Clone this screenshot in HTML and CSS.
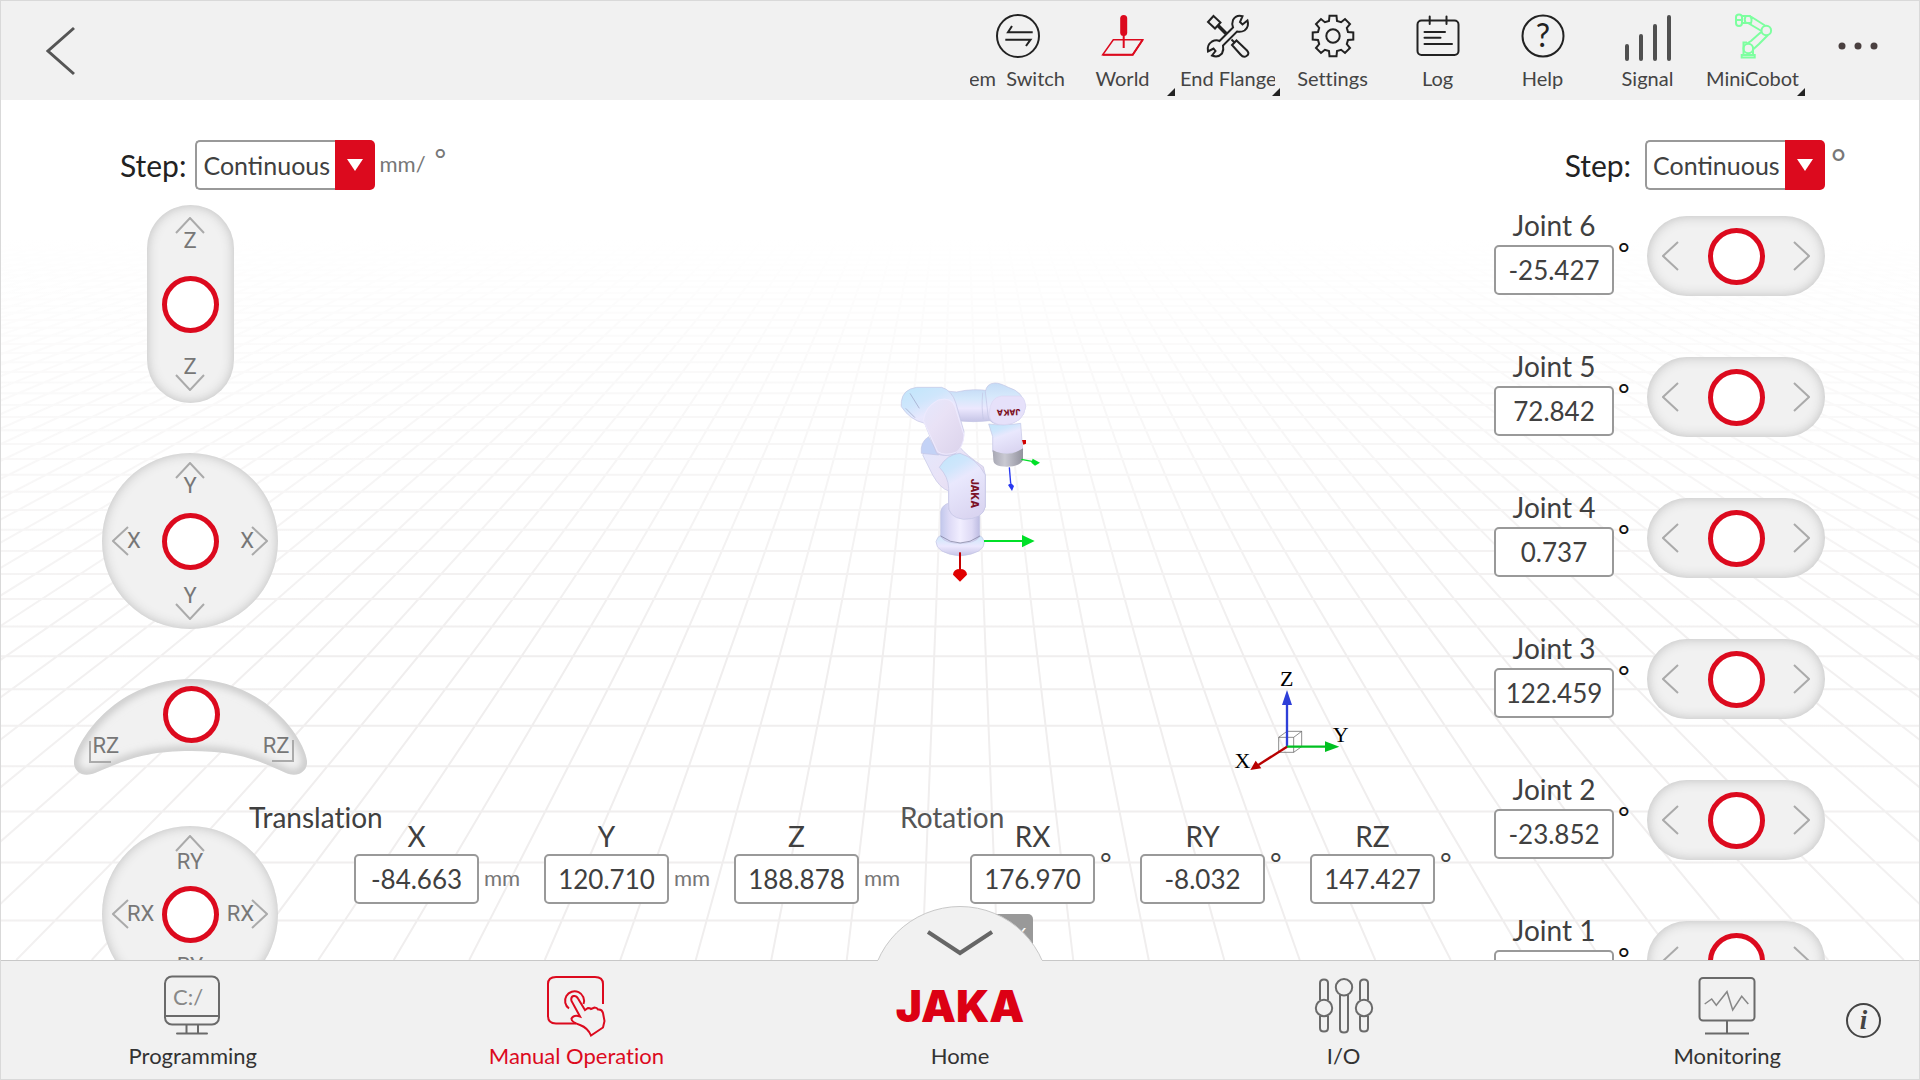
FILE: index.html
```html
<!DOCTYPE html>
<html lang="en">
<head>
<meta charset="utf-8">
<title>Manual Operation</title>
<link rel="stylesheet" href="styles.css">
</head>
<body>
<svg class="defs" aria-hidden="true">
  <symbol id="up" viewBox="0 0 30 17"><path d="M1 16 15 1 29 16"/></symbol>
  <symbol id="down" viewBox="0 0 30 17"><path d="M1 1 15 16 29 1"/></symbol>
  <symbol id="left" viewBox="0 0 17 30"><path d="M16 1 1 15 16 29"/></symbol>
  <symbol id="right" viewBox="0 0 17 30"><path d="M1 1 16 15 1 29"/></symbol>
</svg>
<div class="app">
  <header class="topbar">
    <button class="back" aria-label="Back"><svg width="30" height="50" viewBox="0 0 30 50"><path d="M28 2 2 25 28 48"/></svg></button>
    <nav class="tools">
      <button class="tool">
        <svg class="tool-icon" viewBox="0 0 44 44"><circle cx="22" cy="22" r="21"/><path d="M36.700 18.300H12L16 12M9.300 25.700H34.500L30 32"/></svg>
        <span class="tool-label tool-label-end">em&nbsp; Switch</span>
      </button>
      <button class="tool tool-red">
        <svg class="tool-icon" viewBox="0 0 44 44"><path d="M12.300 25.700H41.700L31.700 40.700H1.700Z" stroke-width="1.500"/><path d="M1.700 40.700H31.700L41.700 25.700M22.700 20V34"/><path d="M22.700 4.500V18.500" stroke-width="7" stroke-linecap="round"/></svg>
        <span class="tool-label">World</span><i class="corner"></i>
      </button>
      <button class="tool">
        <svg class="tool-icon" viewBox="0 0 44 44"><path d="M7.500 2 14.500 8.500 9 14.500 2 8ZM12 11.500 20 19.500M25.500 25.500 29 29M26 31 30.500 26.500 41 36.500Q44 40 40.500 42 37.500 44 34.500 40.500Z"/><path d="M12 11.500 20 19.500" stroke-width="3.500"/><path d="M36.500 2.200Q30 .500 27 6 25.500 10 27 13.500L13.500 27Q10 25.500 6 27.500 .500 31 2 37.500L7.500 34.500 9.500 37 6 41.500Q12 44 16 39.500 18 35.500 17 31.500L31 17.500Q35 18.500 38.500 16.500 43.500 12.500 41.500 6.500L36.500 10.500 34 8Z"/></svg>
        <span class="tool-label tool-label-start">End Flange</span><i class="corner"></i>
      </button>
      <button class="tool">
        <svg class="tool-icon" viewBox="-22 -22 44 44"><circle r="6.700"/><path d="M-4-15-3.500-20.300H3.500L4-15 8.130-13.800 12-17 17-12 13.800-8.130 15-4 20.300-3.500V3.500L15 4 13.800 8.130 17 12 12 17 8.130 13.800 4 15 3.500 20.300H-3.500L-4 15-8.130 13.800-12 17-17 12-13.800 8.130-15 4-20.300 3.500V-3.500L-15-4-13.800-8.130-17-12-12-17-8.130-13.800Z"/></svg>
        <span class="tool-label">Settings</span>
      </button>
      <button class="tool">
        <svg class="tool-icon" viewBox="0 0 44 44"><rect x="1.500" y="6.500" width="41" height="34.500" rx="4"/><path d="M13.700 2.500V10M30.500 2.500V10M8.500 18H29M8.500 23.700H24.500M8.500 30H36" stroke-linecap="round"/></svg>
        <span class="tool-label">Log</span>
      </button>
      <button class="tool">
        <svg class="tool-icon" viewBox="0 0 44 44"><circle cx="22" cy="22" r="20.500"/><text x="22" y="33" class="glyph-help">?</text></svg>
        <span class="tool-label">Help</span>
      </button>
      <button class="tool">
        <svg class="tool-icon" viewBox="0 0 44 44"><path d="M1 32V45M15 22V45M29 12V45M43 3V45" stroke="#505050" stroke-width="4" stroke-linecap="round"/></svg>
        <span class="tool-label">Signal</span>
      </button>
      <button class="tool">
        <svg class="tool-icon tool-green" viewBox="0 0 44 44"><circle cx="35.300" cy="16.500" r="4.800"/><circle cx="17.300" cy="34.500" r="4.800"/><path d="M10.700 41H23.700V43.500H10.700ZM12.500 41V28.500H16M22 41V36M5 3Q5 .500 8 .500T11 3V9Q11 12 8 12T5 9ZM5 6H11M11 2H19Q21.500 5 20 9H11M15 2Q12.500 5.500 15 9M19 2 34 11.500M17 9 30.500 17M16 29.500 20 27 30.700 17.500M22 35.500 28 30 37 21"/></svg>
        <span class="tool-label">MiniCobot</span><i class="corner"></i>
      </button>
      <button class="more" aria-label="More"><svg width="40" height="8" viewBox="0 0 40 8"><circle cx="4" cy="4" r="3.500"/><circle cx="20" cy="4" r="3.500"/><circle cx="36" cy="4" r="3.500"/></svg></button>
    </nav>
  </header>

  <main class="stage">
    <svg class="scene" viewBox="0 0 1920 860" preserveAspectRatio="xMidYMax slice" aria-hidden="true">
      <defs>
        <linearGradient id="fog" x1="0" y1="0" x2="0" y2="1"><stop offset="0" stop-color="#fff"/><stop offset=".16" stop-color="#fff"/><stop offset=".32" stop-color="#fff" stop-opacity=".65"/><stop offset=".65" stop-color="#fff" stop-opacity="0"/></linearGradient>
        <radialGradient id="fogSide" gradientUnits="userSpaceOnUse" cx="960" cy="860" r="1200"><stop offset=".550" stop-color="#fff" stop-opacity="0"/><stop offset="1" stop-color="#fff" stop-opacity=".3"/></radialGradient>
        <linearGradient id="tube" x1="0" x2="1"><stop offset="0" stop-color="#c2c8ec"/><stop offset=".22" stop-color="#dddaf6"/><stop offset=".5" stop-color="#f1eeff"/><stop offset=".8" stop-color="#dedaf5"/><stop offset="1" stop-color="#bdbce2"/></linearGradient>
        <linearGradient id="shell" x1=".2" y1="0" x2=".6" y2="1"><stop offset="0" stop-color="#c3e6fb"/><stop offset=".22" stop-color="#cfe6fc"/><stop offset=".42" stop-color="#e9e8fd"/><stop offset="1" stop-color="#dad5f1"/></linearGradient>
        <linearGradient id="beam" x1="0" y1="0" x2="0" y2="1"><stop offset="0" stop-color="#c5dcf6"/><stop offset=".3" stop-color="#d5e8fb"/><stop offset=".6" stop-color="#ece8fe"/><stop offset="1" stop-color="#c5c4e6"/></linearGradient>
        <linearGradient id="upper" x1="0" y1="0" x2=".9" y2="1"><stop offset="0" stop-color="#e4e8fd"/><stop offset=".4" stop-color="#e9e2f6"/><stop offset="1" stop-color="#dcd4ec"/></linearGradient>
        <linearGradient id="steel" x1="0" x2="1"><stop offset="0" stop-color="#a8a8b4"/><stop offset=".4" stop-color="#c9c9d2"/><stop offset="1" stop-color="#92929e"/></linearGradient>
      </defs>
      <path id="grid" fill="none" stroke="#f0eeee" stroke-width="2"/>
      <rect width="1920" height="860" fill="url(#fog)"/>
      <rect width="1920" height="860" fill="url(#fogSide)"/>
      <g transform="translate(860 260) scale(.33333)">
        <g stroke="#c3c4e4" stroke-width="2">
          <path d="M228 545Q232 515 300 515T373 545Q375 580 300 588 228 580 228 545Z" fill="url(#beam)"/>
          <path d="M242 455Q245 425 300 425T359 470V530Q345 550 300 550T242 530Z" fill="url(#tube)"/>
          <path d="M188 285Q200 262 228 262L300 262Q318 285 370 320L376 345V440Q370 478 300 474 262 462 266 435V393Q240 385 218 345Z" fill="url(#upper)"/>
          <path d="M184 280Q180 246 206 230L236 285Z" fill="#c3d2f6"/>
          <path d="M238 322Q262 282 300 280 350 295 376 345V440Q368 478 310 478 262 472 266 430V385Q265 350 238 322Z" fill="url(#shell)"/>
          <path d="M240 86Q262 96 290 96 340 84 390 93V182Q340 188 290 182L250 150Z" fill="url(#beam)"/>
          <path d="M368 98Q364 145 370 178" fill="none"/>
          <path d="M386 192Q430 198 482 190L488 270Q445 290 398 275V230Z" fill="url(#shell)"/>
          <path d="M376 95Q380 70 405 69 420 69 445 82 490 95 497 140 490 192 430 194 385 195 384 165Z" fill="url(#beam)"/>
          <path d="M388 160Q390 112 425 108H480Q495 112 497 140 490 190 435 194 388 196 388 160Z" fill="#e6e1fa" stroke="#dbd8f3"/>
          <path d="M124 125Q128 88 170 82H245Q275 90 288 130L312 215Q312 255 285 282 250 292 230 280L194 190Q150 180 124 140Z" fill="url(#shell)"/>
          <path d="M190 182Q195 140 235 120 275 110 285 140L312 225Q310 260 290 276 255 290 233 275Z" fill="url(#upper)" stroke="#eeeafe" stroke-width="3"/>
          <path d="M150 100 178 145M137 145 165 173" fill="none" stroke="#9aa0c2"/>
          <path d="M398 270Q445 295 489 265V300Q480 320 440 320T400 300Z" fill="url(#steel)" stroke="none"/>
          <path d="M242 528Q300 570 360 528" fill="none" stroke="#777a96"/>
        </g>
        <text class="decal" transform="translate(333 356) rotate(90)" font-size="31">JAKA</text>
        <text class="decal" transform="translate(481 147) rotate(178)" font-size="25">JAKA</text>
        <path d="M372 543H490" stroke="#00e028" stroke-width="6"/><path d="M486 525 524 543 486 562Z" fill="#00e028"/>
        <path d="M300 577V635" stroke="#c40000" stroke-width="6"/><path d="M279 644Q280 627 300 627T321 644L300 665Z" fill="#e00000"/>
        <path d="M486 240H498V251L490 254Z" fill="#d00000"/>
        <path d="M484 298 520 305" stroke="#00e028" stroke-width="4"/><path d="M518 296 540 308 525 317 514 308Z" fill="#00e028"/>
        <path d="M448 322 452 370" stroke="#2838f0" stroke-width="4"/><path d="M444 375 453 369 462 378 456 393Z" fill="#2838f0"/>
      </g>
      <g transform="translate(1200 550) scale(.33333)">
        <path d="M236 262H281V307H236ZM261 244H305V290H261ZM236 262 261 244M281 262 305 244M281 307 305 290M236 307 261 290" fill="none" stroke="#555" stroke-width="2"/>
        <path d="M261 290V160" stroke="#2e3fd8" stroke-width="7"/><path d="M261 120 276 165H246Z" fill="#2e3fd8"/>
        <path d="M261 290H380" stroke="#00c020" stroke-width="7"/><path d="M418 290 375 274V306Z" fill="#00c020"/>
        <path d="M261 290 175 345" stroke="#b80000" stroke-width="7"/><path d="M151 360 167 332 184 355Z" fill="#b80000"/>
        <g class="axis-name"><text x="260" y="109">Z</text><text x="422" y="277">Y</text><text x="127" y="354">X</text></g>
      </g>
    </svg>

    <div class="steps">
      <div class="step">
        <label for="step-linear">Step:</label>
        <div class="picker"><select id="step-linear"><option>Continuous</option></select><span class="picker-arrow"><svg width="16" height="12" viewBox="0 0 16 12"><path d="M0 0H16L8 12Z"/></svg></span></div>
        <span class="unit">mm/</span><span class="degree">°</span>
      </div>
      <div class="step step-joint">
        <label for="step-joint">Step:</label>
        <div class="picker"><select id="step-joint"><option>Continuous</option></select><span class="picker-arrow"><svg width="16" height="12" viewBox="0 0 16 12"><path d="M0 0H16L8 12Z"/></svg></span></div>
        <span class="degree degree-large">°</span>
      </div>
    </div>

    <div class="board">
      <section class="pads" aria-label="Cartesian jog">
        <div class="pad pad-tall">
          <button class="jog jog-up"><svg class="arrow-v"><use href="#up"/></svg><span>Z</span></button>
          <button class="knob" aria-label="Move Z"></button>
          <button class="jog jog-down"><span>Z</span><svg class="arrow-v"><use href="#down"/></svg></button>
        </div>
        <div class="pad pad-round">
          <button class="jog jog-up"><svg class="arrow-v"><use href="#up"/></svg><span>Y</span></button>
          <button class="jog jog-left"><svg class="arrow-h"><use href="#left"/></svg><span>X</span></button>
          <button class="knob" aria-label="Move X and Y"></button>
          <button class="jog jog-right"><span>X</span><svg class="arrow-h"><use href="#right"/></svg></button>
          <button class="jog jog-down"><span>Y</span><svg class="arrow-v"><use href="#down"/></svg></button>
        </div>
        <div class="pad-arc">
          <svg class="arc" viewBox="0 0 233 97">
            <defs>
              <clipPath id="arcClip"><path d="M0 82C4 58 45 0 117 0S230 58 233 82C234 92 224 99 212 94 185 82 165 72 117 72S50 82 21 94C8 99-1 92 0 82Z"/></clipPath>
              <filter id="soft" x="-10%" y="-10%" width="120%" height="120%"><feGaussianBlur stdDeviation="4"/></filter>
            </defs>
            <g clip-path="url(#arcClip)"><rect width="233" height="97" fill="#f1f1f1"/><path d="M0 82C4 58 45 0 117 0S230 58 233 82C234 92 224 99 212 94 185 82 165 72 117 72S50 82 21 94C8 99-1 92 0 82Z" fill="none" stroke="#bdbdbd" stroke-width="7" filter="url(#soft)"/></g>
            <path d="M16 62V83H37M219 61V82H198" fill="none" stroke="#aaa" stroke-width="2"/>
          </svg>
          <div class="arc-controls"><button class="jog">RZ</button><button class="knob" aria-label="Rotate Z"></button><button class="jog">RZ</button></div>
        </div>
        <div class="pad pad-round pad-tilt">
          <button class="jog jog-up"><svg class="arrow-v"><use href="#up"/></svg><span>RY</span></button>
          <button class="jog jog-left"><svg class="arrow-h"><use href="#left"/></svg><span>RX</span></button>
          <button class="knob" aria-label="Rotate X and Y"></button>
          <button class="jog jog-right"><span>RX</span><svg class="arrow-h"><use href="#right"/></svg></button>
          <button class="jog jog-down"><span>RY</span><svg class="arrow-v"><use href="#down"/></svg></button>
        </div>
      </section>

      <section class="pose">
        <div class="pose-group">
          <h2 class="pose-title">Translation</h2>
          <div class="fields">
            <div class="field"><label for="px">X</label><input id="px" value="-84.663"><span class="unit">mm</span></div>
            <div class="field"><label for="py">Y</label><input id="py" value="120.710"><span class="unit">mm</span></div>
            <div class="field"><label for="pz">Z</label><input id="pz" value="188.878"><span class="unit">mm</span></div>
          </div>
        </div>
        <div class="pose-group pose-rotation">
          <h2 class="pose-title">Rotation</h2>
          <div class="fields">
            <div class="field"><label for="rx">RX</label><input id="rx" value="176.970"><span class="degree">°</span></div>
            <div class="field"><label for="ry">RY</label><input id="ry" value="-8.032"><span class="degree">°</span></div>
            <div class="field"><label for="rz">RZ</label><input id="rz" value="147.427"><span class="degree">°</span></div>
          </div>
        </div>
      </section>

      <section class="joints" aria-label="Joint jog">
        <div class="joint"><div class="joint-field"><label for="j6">Joint 6</label><input id="j6" value="-25.427"><span class="degree">°</span></div><div class="pad pad-wide"><button class="jog" aria-label="Joint 6 minus"><svg class="arrow-h"><use href="#left"/></svg></button><button class="knob" aria-label="Joint 6"></button><button class="jog" aria-label="Joint 6 plus"><svg class="arrow-h"><use href="#right"/></svg></button></div></div>
        <div class="joint"><div class="joint-field"><label for="j5">Joint 5</label><input id="j5" value="72.842"><span class="degree">°</span></div><div class="pad pad-wide"><button class="jog" aria-label="Joint 5 minus"><svg class="arrow-h"><use href="#left"/></svg></button><button class="knob" aria-label="Joint 5"></button><button class="jog" aria-label="Joint 5 plus"><svg class="arrow-h"><use href="#right"/></svg></button></div></div>
        <div class="joint"><div class="joint-field"><label for="j4">Joint 4</label><input id="j4" value="0.737"><span class="degree">°</span></div><div class="pad pad-wide"><button class="jog" aria-label="Joint 4 minus"><svg class="arrow-h"><use href="#left"/></svg></button><button class="knob" aria-label="Joint 4"></button><button class="jog" aria-label="Joint 4 plus"><svg class="arrow-h"><use href="#right"/></svg></button></div></div>
        <div class="joint"><div class="joint-field"><label for="j3">Joint 3</label><input id="j3" value="122.459"><span class="degree">°</span></div><div class="pad pad-wide"><button class="jog" aria-label="Joint 3 minus"><svg class="arrow-h"><use href="#left"/></svg></button><button class="knob" aria-label="Joint 3"></button><button class="jog" aria-label="Joint 3 plus"><svg class="arrow-h"><use href="#right"/></svg></button></div></div>
        <div class="joint"><div class="joint-field"><label for="j2">Joint 2</label><input id="j2" value="-23.852"><span class="degree">°</span></div><div class="pad pad-wide"><button class="jog" aria-label="Joint 2 minus"><svg class="arrow-h"><use href="#left"/></svg></button><button class="knob" aria-label="Joint 2"></button><button class="jog" aria-label="Joint 2 plus"><svg class="arrow-h"><use href="#right"/></svg></button></div></div>
        <div class="joint"><div class="joint-field"><label for="j1">Joint 1</label><input id="j1" value=""><span class="degree">°</span></div><div class="pad pad-wide"><button class="jog" aria-label="Joint 1 minus"><svg class="arrow-h"><use href="#left"/></svg></button><button class="knob" aria-label="Joint 1"></button><button class="jog" aria-label="Joint 1 plus"><svg class="arrow-h"><use href="#right"/></svg></button></div></div>
      </section>
    </div>
    <button class="speed">%</button>
    <button class="dome" aria-label="Collapse"><svg width="66" height="26" viewBox="0 0 66 26"><path d="M1 2 33 23 65 2"/></svg></button>
  </main>

  <footer class="bottombar">
    <nav class="tabs">
      <a class="tab" href="#programming">
        <svg class="tab-icon" viewBox="0 0 60 60"><rect x="2" y="1.500" width="54" height="48" rx="7"/><path d="M2 41H56M23.500 49V58M35 49V58"/><path d="M14 58.500H44" stroke-linecap="round"/><text x="10" y="30" class="glyph-prompt">C:/</text></svg>
        <span>Programming</span>
      </a>
      <a class="tab tab-active" href="#manual">
        <svg class="tab-icon" viewBox="0 0 60 60"><path d="M30 48.500H10Q2 48.500 2 41V9Q2 2 10 2H49Q57 2 57 9V29"/><path d="M23 33.500A9.500 9.500 0 1 1 37.500 29"/><path d="M34 41.500 25.500 26Q24.500 22 27.500 21 30.500 20.500 32 23.500L39 35 42 33Q44 33 45 34L48.500 32.500Q51 32.500 52 34.500 56 34 57 38L58.500 46 57 52.500 45 60.500Q42 53 34 50 25 47 25.500 43.500 28 39.500 34 41.500Z"/></svg>
        <span>Manual Operation</span>
      </a>
      <a class="tab" href="#home"><b class="brand">JAKA</b><span>Home</span></a>
      <a class="tab" href="#io">
        <svg class="tab-icon" viewBox="0 0 60 60"><path d="M6 25V8Q6 4.500 10 4.500T14 8V25M6 41V53Q6 56.500 10 56.500T14 53V41M46 25V8Q46 4.500 50 4.500T54 8V25M46 41V53Q46 56.500 50 56.500T54 53V41M26 20V54Q26 57.500 30 57.500T34 54V20"/><circle cx="10" cy="33" r="8.200"/><circle cx="50" cy="33" r="8.200"/><circle cx="30" cy="12.300" r="8.200"/></svg>
        <span>I/O</span>
      </a>
      <a class="tab" href="#monitoring">
        <svg class="tab-icon" viewBox="0 0 60 60"><rect x="2.500" y="3" width="55" height="42.500" rx="3.500"/><path d="M30 46V58M8 58.500H52"/><path d="M7.700 29 14.700 24 19.300 30.300 30 16.700 35.700 35 44.700 21.300 51.300 29" stroke="#888" stroke-width="1.500"/></svg>
        <span>Monitoring</span>
      </a>
    </nav>
    <button class="info" aria-label="Information">i</button>
  </footer>
</div>
<script src="script.js"></script>
</body>
</html>
```
FILE: styles.css
```css
* { box-sizing: border-box; }
body { margin: 0; font-family: Lato, "Open Sans", sans-serif; font-variant-ligatures: none; color: #404040; background: #fff; }
button { margin: 0; padding: 0; border: 0; background: none; font: inherit; color: inherit; }
svg { display: block; fill: none; flex: none; }
.defs { position: absolute; width: 0; height: 0; }
.app { display: flex; flex-direction: column; height: 100vh; border: 1px solid #d9d9d9; }

/* top bar */
.topbar { display: flex; justify-content: space-between; padding: 0 9px 0 45px; background: #f1f1f1; }
.back { align-self: center; stroke: #555; stroke-width: 3; }
.tools { display: flex; }
.tool { position: relative; display: flex; flex-direction: column; align-items: center; gap: 6px; width: 105px; padding: 13px 0 8px; font-size: 20px; line-height: 28px; font-variant-ligatures: none; color: #444; }
.tool-icon { width: 44px; height: 44px; overflow: visible; stroke: #222; stroke-width: 2; }
.tool-red .tool-icon { stroke: #dc0a1e; }
.tool .tool-green { stroke: #7dff9f; stroke-width: 2; }
.tool-label { display: flex; justify-content: center; width: 95px; overflow: hidden; white-space: nowrap; }
.tool-label-end { justify-content: flex-end; }
.tool-label-start { justify-content: flex-start; }
.glyph-help { font: 32px Lato, sans-serif; fill: #222; stroke: none; text-anchor: middle; }
.corner { position: absolute; right: 0; bottom: 4px; border-left: 8px solid transparent; border-bottom: 8px solid #222; }
.more { display: flex; align-items: center; justify-content: center; width: 105px; padding-bottom: 10px; }
.more svg { fill: #4a4040; }

/* work area */
.stage { position: relative; flex: 1; min-height: 0; display: flex; flex-direction: column; overflow: hidden; }
.scene { position: absolute; inset: 0; width: 100%; height: 100%; }
.decal { font-family: Inter, sans-serif; font-weight: 800; fill: #7c1226; }
.axis-name { font: 66px "Liberation Serif", serif; fill: #000; text-anchor: middle; }
.steps { position: relative; display: flex; justify-content: space-between; padding: 40px 73px 0 119px; }
.step { display: flex; align-items: center; height: 50px; gap: 9px; font-size: 30px; color: #222; }
.step-joint { gap: 14px; }
.picker { display: flex; width: 180px; height: 50px; }
.picker select { appearance: none; width: 140px; padding: 0 0 0 6px; border: 2px solid #999; border-right: 0; border-radius: 5px 0 0 5px; background: #fff; font: 25px Lato, sans-serif; color: #404040; }
.picker-arrow { display: flex; align-items: center; justify-content: center; width: 40px; border-radius: 0 5px 5px 0; background: #dc0a1e; pointer-events: none; }
.picker-arrow svg { fill: #fff; }
.unit { padding-bottom: 3px; font-size: 22px; color: #777; }
.step .unit { margin-left: -5px; }
.degree { font-size: 28px; line-height: 28px; color: #444; }
.step .degree { align-self: flex-start; margin-top: 5px; color: #777; }
.step .degree-large { margin: 8px 0 0 -8px; font-size: 36px; }

.board { position: relative; flex: 1; min-height: 0; display: grid; grid-template-columns: 248px 1fr 425px; grid-template-rows: minmax(0, 1fr); padding-top: 15px; }
.pads { grid-area: 1 / 1 / 2 / 3; display: flex; flex-direction: column; align-items: center; gap: 50px; width: 378px; }
.pad { flex: none; background: #f1f1f1; box-shadow: inset 0 0 12px #bdbdbd; }
.pad-tall { display: flex; flex-direction: column; align-items: center; justify-content: space-between; width: 87px; height: 198px; padding: 12px 0; border-radius: 44px; }
.pad-round { display: grid; grid-template: "up up up" 1fr "left knob right" auto "down down down" 1fr / 1fr auto 1fr; width: 176px; height: 176px; padding: 9px 10px; border-radius: 50%; }
.pad-wide { display: flex; align-items: center; justify-content: space-between; width: 178px; height: 80px; padding: 0 15px; border-radius: 40px; }
.knob { width: 57px; height: 57px; border: 5px solid #dc0a1e; border-radius: 50%; background: #fff; }
.jog { display: flex; align-items: center; font: 22px/22px Roboto, sans-serif; color: #777; stroke: #aaa; stroke-width: 2; }
.arrow-v { width: 30px; height: 17px; }
.arrow-h { width: 17px; height: 30px; }
.jog-up, .jog-down { flex-direction: column; }
.jog-up { grid-area: up; }
.jog-up span { margin-top: -4px; }
.jog-down { grid-area: down; justify-content: flex-end; }
.jog-down span { margin-bottom: -4px; }
.pad-tilt .jog-up span { margin-top: -1px; }
.pad-tilt .jog-down span { margin-bottom: -1px; }
.jog-left { grid-area: left; }
.jog-left span { margin-left: -2px; }
.jog-right { grid-area: right; justify-content: flex-end; }
.jog-right span { margin-right: -3px; }
.pad-arc { display: grid; flex: none; width: 233px; }
.arc { grid-area: 1 / 1; width: 233px; height: 97px; }
.arc-controls { grid-area: 1 / 1; position: relative; display: flex; align-items: flex-start; justify-content: space-between; padding: 7px 17px 0 19px; }
.arc-controls .jog { padding-top: 49px; }

.pose { grid-area: 1 / 2 / 2 / 3; align-self: end; display: flex; padding-bottom: 56px; }
.pose-group { display: flex; align-items: flex-start; }
.pose-title { width: 105px; margin: 0; font-size: 28px; line-height: 40px; font-weight: 400; white-space: nowrap; }
.pose-rotation .pose-title { width: 70px; color: #555; }
.fields { display: flex; gap: 24px; padding-top: 21px; }
.field { display: grid; grid-template-columns: 125px 36px; column-gap: 5px; align-items: center; }
.pose-rotation .fields { gap: 20px; }
.pose-rotation .field { grid-template-columns: 125px 20px; }
.field label { grid-column: 1 / 3; width: 125px; font-size: 28px; line-height: 36px; text-align: center; }
.field .degree, .joint .degree { align-self: start; margin-top: -5px; }
input { width: 100%; height: 50px; padding: 0; border: 2px solid #999; border-radius: 5px; background: #fff; font: 26px Lato, sans-serif; color: #404040; text-align: center; }

.joints { grid-area: 1 / 3; display: flex; flex-direction: column; gap: 50px; }
.joint { display: flex; align-items: flex-end; flex: none; height: 91px; }
.joint-field { display: grid; grid-template-columns: 120px 28px; column-gap: 4px; align-self: flex-start; padding-right: 1px; }
.joint-field label { grid-column: 1 / 3; width: 120px; font-size: 28px; line-height: 40px; text-align: center; }
.joint .degree { margin-top: -6px; color: #111; }

.speed { position: absolute; left: 50%; bottom: 0; width: 73px; height: 46px; padding: 0 5px 6px 0; border-radius: 5px; background: #999; font-size: 22px; color: #fff; text-align: right; }
.dome { position: absolute; left: 50%; bottom: -126px; display: flex; justify-content: center; width: 180px; height: 180px; margin-left: -90px; padding-top: 23px; border: 1px solid #c8c8c8; border-radius: 50%; background: #f1f1f1; stroke: #666; stroke-width: 4; align-items: flex-start; }

/* bottom bar */
.bottombar { position: relative; z-index: 1; background: #f1f1f1; }
.bottombar::before { content: ""; position: absolute; inset: 0 0 auto; height: 1px; background: linear-gradient(90deg, #c8c8c8 calc(50% - 82px), transparent 0 calc(50% + 82px), #c8c8c8 0); }
.tabs { display: grid; grid-template-columns: repeat(5, 1fr); }
.tab { display: flex; flex-direction: column; align-items: center; gap: 7px; padding: 15px 0 9px; font-size: 22px; line-height: 28px; color: #333; text-decoration: none; }
.tab-active { color: #dc0a1e; }
.tab-icon { width: 60px; height: 60px; overflow: visible; stroke: #6a6a6a; stroke-width: 2; }
.tab-active .tab-icon { stroke: #dc0a1e; }
.glyph-prompt { font: 22px Lato, sans-serif; fill: #888; stroke: none; }
.brand { height: 60px; font: 900 44px/62px Inter, sans-serif; color: #dc0014; }
.info { position: absolute; right: 38px; top: 43px; width: 35px; height: 35px; border: 2px solid #444; border-radius: 50%; font: italic bold 27px/29px "Liberation Serif", serif; color: #444; text-align: center; }
```
FILE: script.js
```js
// Floor grid in one-point perspective: lines run to (960, -99).
const horizon = -99;
const floor = 860;
let d = '';
for (let n = 0; n < 46; n++) {
  const y = (horizon + 13683 / (14.88 + n)).toFixed(1);
  d += `M0 ${y}H1920`;
}
for (let n = -60; n < 60; n++) {
  const x = 960 + (n + 0.5) * 75.5;
  const t = (130 - horizon) / (floor - horizon);
  d += `M${x} ${floor}L${(960 + (x - 960) * t).toFixed(1)} 130`;
}
document.getElementById('grid').setAttribute('d', d);
```
